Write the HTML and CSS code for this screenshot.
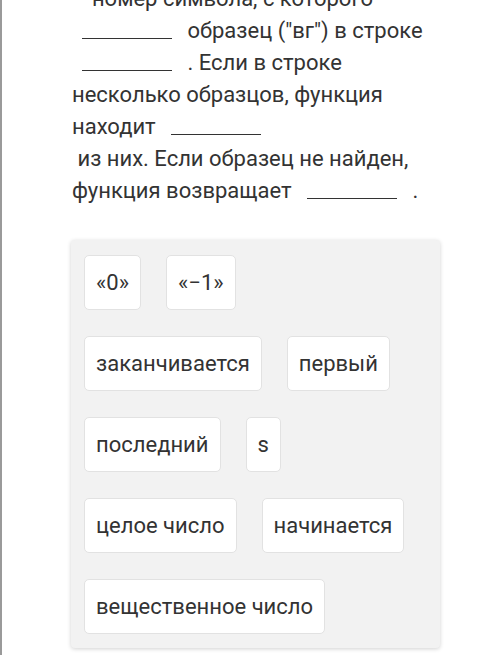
FILE: index.html
```html
<!DOCTYPE html>
<html lang="ru">
<head>
  <meta charset="UTF-8" />
  <meta name="viewport" content="width=device-width, initial-scale=1.0"/>
  <title>Функция find</title>
  <link rel="stylesheet" href="styles.css">
</head>
<body>
  <div class="page">
    <p class="task">
      – номер символа, с которого <span class="blank"></span> образец ("вг") в строке <span class="blank"></span> . Если в строке несколько образцов, функция находит <span class="blank"></span><br>
      &nbsp;из них. Если образец не найден, функция возвращает <span class="blank"></span> .
    </p>

    <div class="bank">
      <span class="chip">«0»</span>
      <span class="chip">«−1»</span>
      <span class="chip">заканчивается</span>
      <span class="chip">первый</span>
      <span class="chip">последний</span>
      <span class="chip">s</span>
      <span class="chip">целое число</span>
      <span class="chip">начинается</span>
      <span class="chip">вещественное число</span>
    </div>
  </div>
</body>
</html>
```

FILE: styles.css
```css
html, body {
  margin: 0;
  background: #fff;
}
body {
  font-family: Roboto, 'Noto Sans', sans-serif;
  color: #333;
  overflow: hidden;
}
.page {
  border-left: 2px solid #9a9a9a;
  min-height: 672px;
  padding: 0 40px 0 70px;
  box-sizing: border-box;
}
.task {
  margin: -17px 0 0;
  font-size: 22px;
  line-height: 32px;
  max-width: 362px;
}
.blank {
  display: inline-block;
  width: 90px;
  height: 1px;
  margin: 0 10px;
  border-bottom: 1.5px solid #333;
  vertical-align: -1px;
}
.bank {
  margin-top: 33px;
  margin-left: -1px;
  width: 369px;
  box-sizing: border-box;
  padding: 15px 13px 14px;
  background: #f2f2f2;
  border-radius: 4px;
  box-shadow: 0 1px 4px rgba(0, 0, 0, 0.18);
  display: flex;
  flex-wrap: wrap;
  gap: 26px 25px;
}
.chip {
  display: flex;
  align-items: center;
  height: 55px;
  box-sizing: border-box;
  padding: 0 11px;
  background: #fff;
  border: 1px solid #e2e2e2;
  border-radius: 5px;
  font-size: 22px;
  color: #333;
}
```
